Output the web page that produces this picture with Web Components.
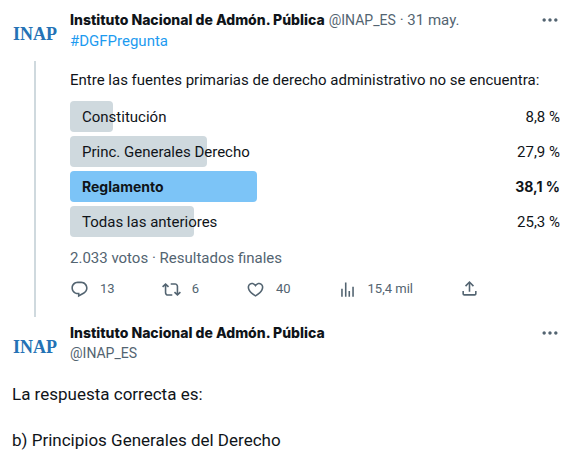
<!DOCTYPE html>
<html lang="es">
<head>
<meta charset="utf-8">
<meta name="viewport" content="width=device-width, initial-scale=1">
<title>INAP</title>
<style>
  body { margin: 0; background: #fff; color: #0f1419; font: 15px/20px Roboto, "Liberation Sans", sans-serif; --muted: #536471; --link: #1d9bf0; --line: #cfd9de; }
</style>
</head>
<body>
<tweet-thread>
  <tweet-post threaded>
    <user-avatar slot="avatar"></user-avatar>
    <tweet-header name="Instituto Nacional de Admón. Pública" handle="@INAP_ES" date="31 may."></tweet-header>
    <tweet-text tag="#DGFPregunta">Entre las fuentes primarias de derecho administrativo no se encuentra:</tweet-text>
    <poll-results>
      <poll-option share="8.8">Constitución</poll-option>
      <poll-option share="27.9">Princ. Generales Derecho</poll-option>
      <poll-option share="38.1" winner>Reglamento</poll-option>
      <poll-option share="25.3">Todas las anteriores</poll-option>
      <span slot="summary">2.033 votos · Resultados finales</span>
    </poll-results>
    <tweet-actions>
      <tweet-action icon="reply" label="Responder">13</tweet-action>
      <tweet-action icon="retweet" label="Retwittear">6</tweet-action>
      <tweet-action icon="like" label="Me gusta">40</tweet-action>
      <tweet-action icon="views" label="Visualizaciones">15,4 mil</tweet-action>
      <tweet-action icon="share" label="Compartir"></tweet-action>
    </tweet-actions>
  </tweet-post>
  <tweet-post>
    <user-avatar slot="avatar"></user-avatar>
    <tweet-header stacked name="Instituto Nacional de Admón. Pública" handle="@INAP_ES"></tweet-header>
    <answer-text slot="below"><p>La respuesta correcta es:</p><p>b) Principios Generales del Derecho</p></answer-text>
  </tweet-post>
</tweet-thread>
<script>
const define = (name, html, setup) => {
  const template = document.createElement('template');
  template.innerHTML = html;
  customElements.define(name, class extends HTMLElement {
    connectedCallback() {
      if (this.shadowRoot) return;
      const root = this.attachShadow({ mode: 'open' });
      root.append(template.content.cloneNode(true));
      if (setup) setup(this, root);
    }
  });
};

const ICONS = {
  reply: 'M1.751 10c0-4.42 3.584-8 8.005-8h4.366c4.49 0 8.129 3.64 8.129 8.13 0 2.96-1.607 5.68-4.196 7.11l-8.054 4.46v-3.69h-.067c-4.49.1-8.183-3.51-8.183-8.01zm8.005-6c-3.317 0-6.005 2.69-6.005 6 0 3.37 2.77 6.08 6.138 6.01l.351-.01h1.761v2.3l5.087-2.81c1.951-1.08 3.163-3.13 3.163-5.36 0-3.39-2.744-6.13-6.129-6.13H9.756z',
  retweet: 'M4.5 3.88l4.432 4.14-1.364 1.46L5.5 7.55V16c0 1.1.896 2 2 2H13v2H7.5c-2.209 0-4-1.79-4-4V7.55L1.432 9.48.068 8.02 4.5 3.88zM16.5 6H11V4h5.5c2.209 0 4 1.79 4 4v8.45l2.068-1.93 1.364 1.46-4.432 4.14-4.432-4.14 1.364-1.46 2.068 1.93V8c0-1.1-.896-2-2-2z',
  like: 'M16.697 5.5c-1.222-.06-2.679.51-3.89 2.16l-.805 1.09-.806-1.09C9.984 6.01 8.526 5.44 7.304 5.5c-1.243.07-2.349.78-2.91 1.91-.552 1.12-.633 2.78.479 4.82 1.074 1.97 3.257 4.27 7.129 6.61 3.87-2.34 6.052-4.64 7.126-6.61 1.111-2.04 1.03-3.7.477-4.82-.561-1.13-1.666-1.84-2.908-1.91zm4.187 7.69c-1.351 2.48-4.001 5.12-8.379 7.67l-.503.3-.504-.3c-4.379-2.55-7.029-5.19-8.382-7.67-1.36-2.5-1.41-4.86-.514-6.67.887-1.79 2.647-2.91 4.601-3.01 1.651-.09 3.368.56 4.798 2.01 1.429-1.45 3.146-2.1 4.796-2.01 1.954.1 3.714 1.22 4.601 3.01.896 1.81.846 4.17-.514 6.67z',
  views: 'M8.75 21V3h2v18h-2zM18 21V8.5h2V21h-2zM4 21l.004-10h2L6 21H4zm9.248 0v-7h2v7h-2z',
  share: 'M12 2.59l5.7 5.7-1.41 1.42L13 6.41V16h-2V6.41l-3.3 3.3-1.41-1.42L12 2.59zM21 15l-.02 3.51c0 1.38-1.12 2.49-2.5 2.49H5.5C4.11 21 3 19.88 3 18.5V15h2v3.5c0 .28.22.5.5.5h12.98c.28 0 .5-.22.5-.5L19 15h2z'
};

define('tweet-thread', `
<style>:host { display: flex; flex-direction: column; gap: 6px; padding: 10px 11px 8px 12px; }</style>
<slot></slot>`);

define('tweet-post', `
<style>
  :host { display: block; }
  .row { display: flex; gap: 12px; }
  .side { display: flex; flex-direction: column; align-items: center; gap: 4px; flex: none; }
  .line { display: none; width: 2px; flex: 1; background: var(--line); }
  :host([threaded]) .line { display: block; }
  .main { flex: 1; min-width: 0; }
  :host([threaded]) .main { padding-bottom: 18px; }
</style>
<article>
  <div class="row">
    <div class="side"><slot name="avatar"></slot><div class="line"></div></div>
    <div class="main"><slot></slot></div>
  </div>
  <slot name="below"></slot>
</article>`);

define('user-avatar', `
<style>
  :host { display: grid; place-items: center; width: 46px; height: 47px; }
  a { color: #2472b5; text-decoration: none; font: bold 18px/20px "Liberation Serif", serif; }
</style>
<a href="#inap">INAP</a>`);

define('tweet-header', `
<style>
  :host { display: flex; justify-content: space-between; align-items: flex-start; gap: 8px; }
  .who { display: flex; flex-wrap: wrap; gap: 0 4px; color: var(--muted); }
  :host([stacked]) .who { flex-direction: column; }
  a { color: inherit; text-decoration: none; }
  .name { font: 800 14px/20px Inter, "Liberation Sans", sans-serif; color: #0f1419; }
  .handle { font-size: 14px; }
  button { flex: none; display: grid; padding: 0; border: 0; background: none; color: var(--muted); cursor: pointer; }
  svg { width: 20px; height: 20px; fill: currentColor; }
</style>
<div class="who"><a class="name" href="#inap"></a><a class="handle" href="#inap"></a></div>
<button type="button" aria-label="Más opciones"><svg viewBox="0 0 24 24" aria-hidden="true"><path d="M3 12c0-1.1.9-2 2-2s2 .9 2 2-.9 2-2 2-2-.9-2-2zm9 2c1.1 0 2-.9 2-2s-.9-2-2-2-2 .9-2 2 .9 2 2 2zm7 0c1.1 0 2-.9 2-2s-.9-2-2-2-2 .9-2 2 .9 2 2 2z"/></svg></button>`,
(host, root) => {
  root.querySelector('.name').textContent = host.getAttribute('name');
  root.querySelector('.handle').textContent = host.getAttribute('handle');
  if (host.hasAttribute('date')) {
    const time = document.createElement('time');
    time.textContent = '· ' + host.getAttribute('date');
    root.querySelector('.who').append(time);
  }
});

define('tweet-text', `
<style>
  :host { display: block; margin-top: 1px; }
  a { color: var(--link); text-decoration: none; }
  p { margin: 19px 0 0; }
</style>
<a href="#tag"></a><p><slot></slot></p>`,
(host, root) => { root.querySelector('a').textContent = host.getAttribute('tag'); });

define('poll-results', `
<style>
  :host { display: flex; flex-direction: column; gap: 4px; margin-top: 11px; }
  .summary { margin-top: 7px; color: var(--muted); }
</style>
<slot></slot><div class="summary"><slot name="summary"></slot></div>`);

define('poll-option', `
<style>
  :host { display: flex; justify-content: space-between; align-items: center; height: 31px; padding-left: 12px;
    position: relative; isolation: isolate; }
  .bar { position: absolute; z-index: -1; inset: 0 auto 0 0; border-radius: 4px; background: var(--line); }
  :host([winner]) { font: 700 14px/20px Inter, "Liberation Sans", sans-serif; }
  :host([winner]) .bar { background: #7cc4f7; }
</style>
<div class="bar"></div><span><slot></slot></span><span class="value"></span>`,
(host, root) => {
  const share = host.getAttribute('share');
  root.querySelector('.bar').style.width = share + '%';
  root.querySelector('.value').textContent = share.replace('.', ',') + ' %';
});

define('tweet-actions', `
<style>:host { display: flex; flex-wrap: wrap; gap: 8px 47px; margin-top: 11px; }</style>
<slot></slot>`);

define('tweet-action', `
<style>
  :host { display: block; }
  button { display: flex; align-items: center; gap: 11px; padding: 0; border: 0; background: none; color: var(--muted);
    font: 13px/20px Roboto, "Liberation Sans", sans-serif; cursor: pointer; }
  svg { width: 19px; height: 19px; fill: currentColor; }
</style>
<button type="button"><svg viewBox="0 0 24 24" aria-hidden="true"><path/></svg><slot></slot></button>`,
(host, root) => {
  root.querySelector('path').setAttribute('d', ICONS[host.getAttribute('icon')]);
  root.querySelector('button').setAttribute('aria-label', (host.getAttribute('label') + ' ' + host.textContent).trim());
});

define('answer-text', `
<style>
  :host { display: block; margin-top: 13px; font-size: 17px; line-height: 23px; }
  ::slotted(p) { margin: 0 0 23px !important; }
  ::slotted(p:last-child) { margin-bottom: 0 !important; }
</style>
<slot></slot>`);
</script>
</body>
</html>
